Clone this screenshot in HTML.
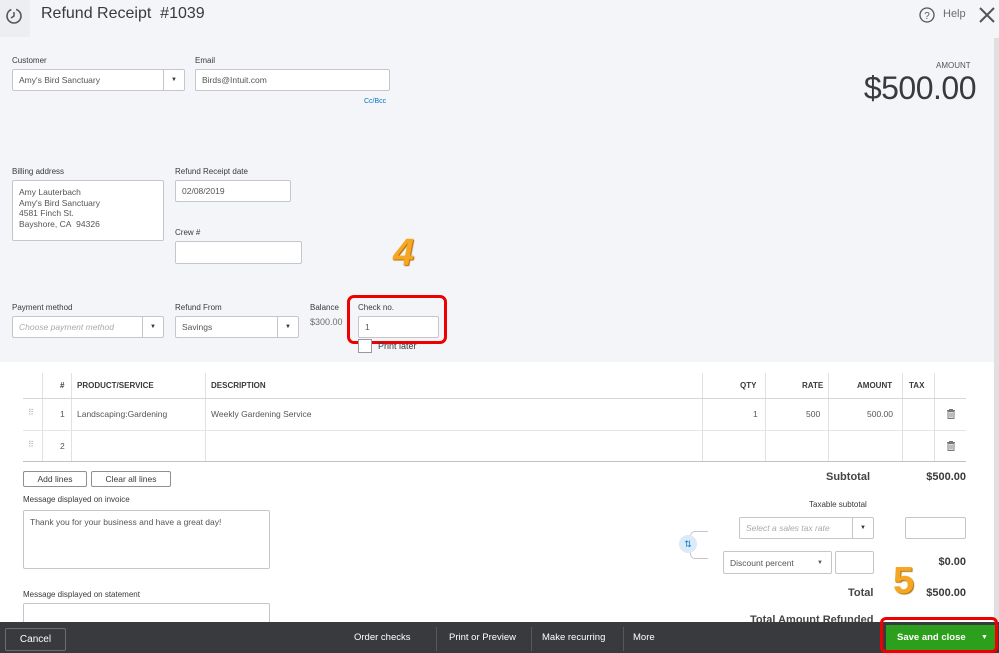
<!DOCTYPE html><html><head><style>
*{box-sizing:border-box;margin:0;padding:0}
body{width:999px;height:653px;overflow:hidden;position:relative;background:#fff;font-family:"Liberation Sans",sans-serif;color:#393a3d}
.a{position:absolute}
.top{left:0;top:0;width:999px;height:362px;background:#f4f5f8}
.lbl{font-size:8px;color:#393a3d}
.in{position:absolute;background:#fff;border:1px solid #c4c6cb;border-radius:2px;font-size:8.5px;color:#555;padding:0 0 0 6px;display:flex;align-items:center}
.dd{position:absolute;right:0;top:0;bottom:0;width:21px;border-left:1px solid #c4c6cb;display:flex;align-items:center;justify-content:center;font-size:6px;color:#333}
.ph{font-style:italic;color:#aaa}
.th{font-size:8px;font-weight:bold;color:#393a3d}
.td{font-size:8.5px;color:#555}
.vl{position:absolute;width:1px;background:#e0e1e4}
.hl{position:absolute;height:1px;background:#d4d7dc}
.btn{position:absolute;border:1px solid #8d9096;border-radius:2px;font-size:8.5px;display:flex;align-items:center;justify-content:center;background:#fff}
.bb{font-size:9.5px;color:#fff}
.sep{position:absolute;top:627px;width:1px;height:24px;background:#55575c}
.r{text-align:right}
.tr{position:absolute;width:8px;height:10px}
</style></head><body>
<div class="a top"></div>
<div class="a" style="left:0;top:0;width:30px;height:37px;background:#eceef1"></div>
<svg class="a" style="left:4px;top:6px" width="20" height="20" viewBox="0 0 20 20"><circle cx="10" cy="10" r="7" fill="none" stroke="#555" stroke-width="1.6" stroke-dasharray="30 5"/><path d="M10 6v4l-3 2" stroke="#555" stroke-width="1.5" fill="none"/></svg>
<div class="a" style="left:41px;top:5px;font-size:16px;color:#393a3d">Refund Receipt&nbsp; #1039</div>
<svg class="a" style="left:919px;top:7px" width="16" height="16"><circle cx="8" cy="8" r="7" fill="none" stroke="#555" stroke-width="1.3"/><text x="8" y="12" font-size="10" text-anchor="middle" fill="#555" font-family="Liberation Sans">?</text></svg>
<div class="a" style="left:943px;top:8px;font-size:11px;color:#6b6c72">Help</div>
<svg class="a" style="left:978px;top:6px" width="18" height="18"><path d="M2 2L16 16M16 2L2 16" stroke="#555" stroke-width="2"/></svg>
<div class="a" style="left:994px;top:38px;width:5px;height:585px;background:#e0e0e0"></div>

<div class="a lbl" style="left:12px;top:56px">Customer</div>
<div class="in" style="left:12px;top:69px;width:173px;height:22px">Amy's Bird Sanctuary<div class="dd">▼</div></div>
<div class="a lbl" style="left:195px;top:56px">Email</div>
<div class="in" style="left:195px;top:69px;width:195px;height:22px">Birds@Intuit.com</div>
<div class="a" style="left:364px;top:98px;font-size:7px;color:#0077c5">Cc/Bcc</div>
<div class="a" style="left:936px;top:61px;font-size:8px;color:#555">AMOUNT</div>
<div class="a r" style="left:820px;top:70px;width:156px;font-size:32px;color:#393a3d;letter-spacing:-0.5px">$500.00</div>

<div class="a lbl" style="left:12px;top:167px">Billing address</div>
<div class="in" style="left:12px;top:180px;width:152px;height:61px;align-items:flex-start;padding-top:6px;line-height:10.5px">Amy Lauterbach<br>Amy's Bird Sanctuary<br>4581 Finch St.<br>Bayshore, CA&nbsp; 94326</div>
<div class="a lbl" style="left:175px;top:167px">Refund Receipt date</div>
<div class="in" style="left:175px;top:180px;width:116px;height:22px">02/08/2019</div>
<div class="a lbl" style="left:175px;top:228px">Crew #</div>
<div class="in" style="left:175px;top:241px;width:127px;height:23px"></div>
<div class="a" style="left:393px;top:232px;font-size:38px;font-weight:bold;font-style:italic;color:#f5a623;text-shadow:1px 1px 1px #b06d00">4</div>

<div class="a lbl" style="left:12px;top:303px">Payment method</div>
<div class="in" style="left:12px;top:316px;width:152px;height:22px"><span class="ph">Choose payment method</span><div class="dd">▼</div></div>
<div class="a lbl" style="left:175px;top:303px">Refund From</div>
<div class="in" style="left:175px;top:316px;width:124px;height:22px">Savings<div class="dd">▼</div></div>
<div class="a lbl" style="left:310px;top:303px">Balance</div>
<div class="a" style="left:310px;top:317px;font-size:9px;color:#6b6c72">$300.00</div>
<div class="a lbl" style="left:358px;top:303px">Check no.</div>
<div class="in" style="left:358px;top:316px;width:81px;height:22px">1</div>
<div class="a" style="left:347px;top:295px;width:100px;height:49px;border:3px solid #e00;border-radius:7px"></div>
<div class="a" style="left:358px;top:339px;width:14px;height:14px;border:1px solid #999;background:#fff"></div>
<div class="a" style="left:378px;top:341px;font-size:9px;color:#393a3d">Print later</div>

<div class="vl" style="left:42px;top:373px;height:88px"></div>
<div class="vl" style="left:71px;top:373px;height:88px"></div>
<div class="vl" style="left:205px;top:373px;height:88px"></div>
<div class="vl" style="left:702px;top:373px;height:88px"></div>
<div class="vl" style="left:765px;top:373px;height:88px"></div>
<div class="vl" style="left:828px;top:373px;height:88px"></div>
<div class="vl" style="left:902px;top:373px;height:88px"></div>
<div class="vl" style="left:934px;top:373px;height:88px"></div>
<div class="hl" style="left:23px;top:398px;width:943px"></div>
<div class="hl" style="left:23px;top:430px;width:943px;background:#e3e5e8"></div>
<div class="hl" style="left:23px;top:461px;width:943px;background:#bfc2c7"></div>
<div class="a th" style="left:60px;top:381px">#</div>
<div class="a th" style="left:77px;top:381px">PRODUCT/SERVICE</div>
<div class="a th" style="left:211px;top:381px">DESCRIPTION</div>
<div class="a th" style="left:740px;top:381px">QTY</div>
<div class="a th" style="left:802px;top:381px">RATE</div>
<div class="a th" style="left:857px;top:381px">AMOUNT</div>
<div class="a th" style="left:909px;top:381px">TAX</div>
<div class="a td" style="left:28px;top:408px;color:#aaa;font-size:8px">⠿</div>
<div class="a td" style="left:60px;top:409px">1</div>
<div class="a td" style="left:77px;top:409px">Landscaping:Gardening</div>
<div class="a td" style="left:211px;top:409px">Weekly Gardening Service</div>
<div class="a td" style="left:753px;top:409px">1</div>
<div class="a td" style="left:806px;top:409px">500</div>
<div class="a td" style="left:867px;top:409px">500.00</div>
<svg class="tr" style="left:947px;top:409px" viewBox="0 0 8 10"><path d="M0 1.5h8M2.5 1.5V0.5h3v1M1 2.5h6v7H1zM3 3.5v5M5 3.5v5" stroke="#777" fill="none" stroke-width="1"/></svg>
<div class="a td" style="left:28px;top:440px;color:#aaa;font-size:8px">⠿</div>
<div class="a td" style="left:60px;top:441px">2</div>
<svg class="tr" style="left:947px;top:441px" viewBox="0 0 8 10"><path d="M0 1.5h8M2.5 1.5V0.5h3v1M1 2.5h6v7H1zM3 3.5v5M5 3.5v5" stroke="#777" fill="none" stroke-width="1"/></svg>

<div class="btn" style="left:23px;top:471px;width:64px;height:16px">Add lines</div>
<div class="btn" style="left:91px;top:471px;width:80px;height:16px">Clear all lines</div>
<div class="a lbl" style="left:23px;top:495px">Message displayed on invoice</div>
<div class="in" style="left:23px;top:510px;width:247px;height:59px;align-items:flex-start;padding-top:6px">Thank you for your business and have a great day!</div>
<div class="a lbl" style="left:23px;top:590px">Message displayed on statement</div>
<div class="in" style="left:23px;top:603px;width:247px;height:30px"></div>

<div class="a" style="left:826px;top:471px;font-size:11px;font-weight:bold;color:#444">Subtotal</div>
<div class="a r" style="left:880px;top:471px;width:86px;font-size:11px;font-weight:bold">$500.00</div>
<div class="a" style="left:809px;top:500px;font-size:8px">Taxable subtotal</div>
<div class="in" style="left:739px;top:517px;width:135px;height:22px"><span class="ph">Select a sales tax rate</span><div class="dd">▼</div></div>
<div class="in" style="left:905px;top:517px;width:61px;height:22px"></div>
<div class="a" style="left:690px;top:531px;width:18px;height:28px;border:1px solid #c4c6cb;border-right:none;border-radius:5px 0 0 5px"></div>
<div class="a" style="left:679px;top:535px;width:18px;height:18px;border-radius:9px;background:#dbe9f8;color:#0077c5;font-size:9px;text-align:center;line-height:18px">⇅</div>
<div class="in" style="left:723px;top:551px;width:109px;height:23px">Discount percent<span style="position:absolute;right:8px;font-size:6px">▼</span></div>
<div class="in" style="left:835px;top:551px;width:39px;height:23px"></div>
<div class="a r" style="left:880px;top:556px;width:86px;font-size:11px;font-weight:bold">$0.00</div>
<div class="a" style="left:848px;top:587px;font-size:11px;font-weight:bold;color:#444">Total</div>
<div class="a r" style="left:880px;top:587px;width:86px;font-size:11px;font-weight:bold">$500.00</div>
<div class="a" style="left:893px;top:560px;font-size:38px;font-weight:bold;color:#f5a623;text-shadow:1px 1px 1px #b06d00">5</div>
<div class="a" style="left:750px;top:614px;font-size:11px;font-weight:bold;color:#444">Total Amount Refunded</div>

<div class="a" style="left:0;top:622px;width:999px;height:31px;background:#393a3d"></div>
<div class="a" style="left:5px;top:628px;width:61px;height:23px;border:1px solid #6b6c72;border-radius:2px;color:#fff;font-size:10px;text-align:center;line-height:21px">Cancel</div>
<div class="a bb" style="left:354px;top:632px">Order checks</div>
<div class="sep" style="left:436px"></div>
<div class="a bb" style="left:449px;top:632px">Print or Preview</div>
<div class="sep" style="left:531px"></div>
<div class="a bb" style="left:542px;top:632px">Make recurring</div>
<div class="sep" style="left:623px"></div>
<div class="a bb" style="left:633px;top:632px">More</div>
<div class="a" style="left:886px;top:625px;width:110px;height:26px;background:#2ca01c"></div>
<div class="a" style="left:897px;top:632px;font-size:9.5px;font-weight:bold;color:#fff">Save and close</div>
<div class="a" style="left:981px;top:634px;font-size:7px;color:#fff">▼</div>
<div class="a" style="left:880px;top:617px;width:118px;height:36px;border:3px solid #e00;border-radius:6px"></div>
</body></html>
